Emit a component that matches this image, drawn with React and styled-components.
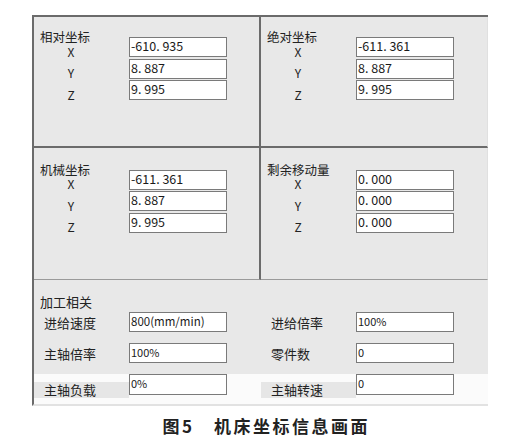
import React from "react";
import styled, { createGlobalStyle } from "styled-components";

const Global = createGlobalStyle`
  html, body { margin: 0; padding: 0; background: #fff; }
  body { font-family: "Noto Sans CJK SC", "Noto Sans", sans-serif; color: #222; }
  * { box-sizing: border-box; }
`;

const Page = styled.div`
  width: 530px;
  height: 445px;
  padding: 15px 0 0 32px;
  overflow: hidden;
`;

const Panel = styled.div`
  width: 456px;
  border-top: 2px solid #6b6b6b;
  border-left: 2px solid #6b6b6b;
  border-bottom: 2px solid #e2e2e2;
`;

const CoordGrid = styled.div`
  display: grid;
  grid-template-columns: 227px 227px;
  grid-template-rows: 131px 132px;
  background: #e8e8e8;
`;

const Cell = styled.div`
  display: flex;
  padding-top: ${(p) => p.$pt}px;
  border-right: ${(p) => (p.$right ? "1px solid #e0e0e0" : "2px solid #6b6b6b")};
  border-bottom: ${(p) => (p.$mid ? "1px solid #9a9a9a" : "2px solid #6b6b6b")};
`;

const LeftCol = styled.div`
  width: 95px;
  padding-left: 6px;
  display: flex;
  flex-direction: column;
`;

const Title = styled.div`
  font-size: 12.5px;
  line-height: 12px;
  white-space: nowrap;
  color: #222;
`;

const AxisLabel = styled.div`
  width: 62px;
  height: 21.5px;
  padding-top: 2.5px;
  line-height: 11px;
  font-size: 12px;
  text-align: center;
  color: #222;
`;

const FieldCol = styled.div`
  padding-top: 6px;
  display: flex;
  flex-direction: column;
  gap: 1.5px;
`;

const Field = styled.div`
  width: 98px;
  height: ${(p) => p.$h || 20}px;
  border: 1px solid #7a7a7a;
  background: #fff;
  font-size: ${(p) => p.$fs || 12.5}px;
  line-height: ${(p) => (p.$h || 20) - 4}px;
  padding-left: 1px;
  white-space: nowrap;
  color: #1a1a1a;
`;

const WorkGrey = styled.div`
  background: #e8e8e8;
  padding: 16px 0 10px;
`;

const WorkTitle = styled(Title)`
  font-size: 13px;
  margin-left: 6px;
`;

const ParamGrid = styled.div`
  display: grid;
  grid-template-columns: 227px 227px;
  row-gap: 10px;
  margin-top: 4px;
`;

const Param = styled.div`
  display: flex;
  align-items: flex-start;
`;

const ParamLabel = styled.div`
  width: 95px;
  height: ${(p) => (p.$patch ? 16 : 20)}px;
  margin-top: ${(p) => (p.$patch ? 8 : 1)}px;
  padding-left: 10px;
  font-size: 13px;
  line-height: ${(p) => (p.$patch ? 16 : 20)}px;
  background: ${(p) => (p.$patch ? "#e6e6e6" : "transparent")};
  white-space: nowrap;
  color: #222;
`;

const WorkWhite = styled.div`
  background: #fbfbfb;
  height: 30px;
  display: grid;
  grid-template-columns: 227px 227px;
`;

const Caption = styled.div`
  margin-top: 10px;
  width: 530px;
  margin-left: -32px;
  text-align: center;
  font-family: "Noto Sans CJK SC", sans-serif;
  font-weight: 700;
  font-size: 17px;
  line-height: 20px;
  letter-spacing: 2.5px;
  padding-left: 2.5px;
  color: #222;
`;

const coords = [
  { title: "相对坐标", vals: ["-610. 935", "8. 887", "9. 995"] },
  { title: "绝对坐标", vals: ["-611. 361", "8. 887", "9. 995"], right: true },
  { title: "机械坐标", vals: ["-611. 361", "8. 887", "9. 995"], mid: true },
  { title: "剩余移动量", vals: ["0. 000", "0. 000", "0. 000"], mid: true, right: true },
];

function CoordCell({ title, vals, right, mid }) {
  return (
    <Cell $right={right} $mid={mid} $pt={mid ? 15.5 : 14}>
      <LeftCol>
        <Title>{title}</Title>
        {["X", "Y", "Z"].map((a) => (
          <AxisLabel key={a}>{a}</AxisLabel>
        ))}
      </LeftCol>
      <FieldCol>
        {vals.map((v, i) => (
          <Field key={i}>{v}</Field>
        ))}
      </FieldCol>
    </Cell>
  );
}

export default function App() {
  return (
    <>
      <Global />
      <Page>
        <Panel>
          <CoordGrid>
            {coords.map((c) => (
              <CoordCell key={c.title} {...c} />
            ))}
          </CoordGrid>
          <WorkGrey>
            <WorkTitle>加工相关</WorkTitle>
            <ParamGrid>
              <Param>
                <ParamLabel>进给速度</ParamLabel>
                <Field $fs={11.5}>800(mm/min)</Field>
              </Param>
              <Param>
                <ParamLabel>进给倍率</ParamLabel>
                <Field $fs={11}>100%</Field>
              </Param>
              <Param>
                <ParamLabel>主轴倍率</ParamLabel>
                <Field $fs={11}>100%</Field>
              </Param>
              <Param>
                <ParamLabel>零件数</ParamLabel>
                <Field $fs={11}>0</Field>
              </Param>
            </ParamGrid>
          </WorkGrey>
          <WorkWhite>
            <Param>
              <ParamLabel $patch>主轴负载</ParamLabel>
              <Field $fs={11} $h={21}>0%</Field>
            </Param>
            <Param>
              <ParamLabel $patch>主轴转速</ParamLabel>
              <Field $fs={11} $h={21}>0</Field>
            </Param>
          </WorkWhite>
        </Panel>
        <Caption>图5　机床坐标信息画面</Caption>
      </Page>
    </>
  );
}
